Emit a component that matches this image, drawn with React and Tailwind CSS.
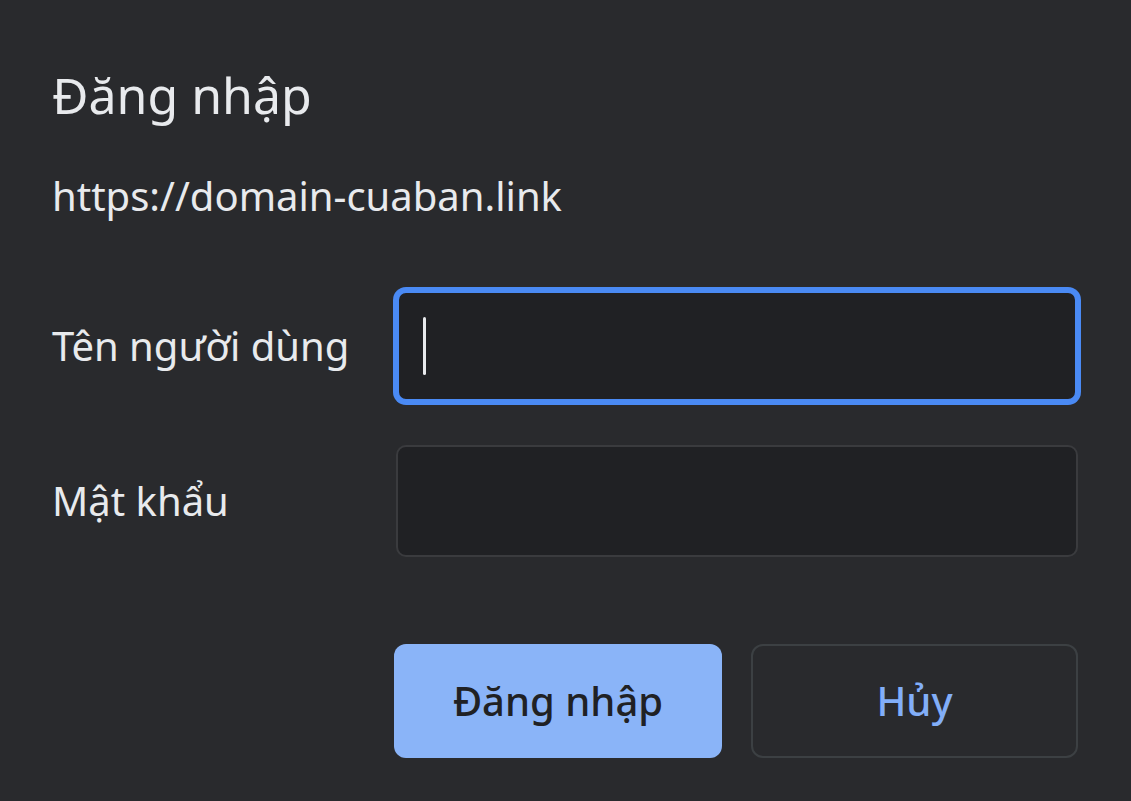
import React from 'react';

export default function App() {
  return (
    <div
      className="w-[1131px] h-[801px] bg-[#292a2d] text-[#e8eaed] pl-[52px] pr-[53px] pt-[65px] flex flex-col"
      style={{ fontFamily: '"Noto Sans", "Open Sans", sans-serif' }}
    >
      <h1 className="text-[50px] leading-[60px] font-normal">Đăng nhập</h1>
      <p className="text-[40px] leading-[50px] mt-[46px]">https://domain-cuaban.link</p>

      {/* Form fields */}
      <div className="mt-[69px] grid grid-cols-[344px_1fr] gap-y-[43px] items-center">
        <label className="text-[40px] leading-[50px]">Tên người dùng</label>
        <div className="h-[112px] rounded-[10px] bg-[#202124] border-[3px] border-[#4a8af4] ring-[3px] ring-[#4a8af4] flex items-center pl-[24px]">
          <span className="w-[3px] h-[58px] bg-[#e8eaed] rounded-full" />
        </div>

        <label className="text-[40px] leading-[50px]">Mật khẩu</label>
        <div className="h-[112px] rounded-[10px] bg-[#202124] border-2 border-[#3a3b3e]" />
      </div>

      {/* Buttons */}
      <div className="mt-[87px] pl-[342px] flex gap-[29px]">
        <button className="w-[328px] h-[114px] rounded-[12px] bg-[#8ab4f8] text-[#202124] text-[40px] font-medium">
          Đăng nhập
        </button>
        <button className="w-[327px] h-[114px] rounded-[12px] border-2 border-[#3c4043] text-[#82aef8] text-[40px] font-medium">
          Hủy
        </button>
      </div>
    </div>
  );
}
